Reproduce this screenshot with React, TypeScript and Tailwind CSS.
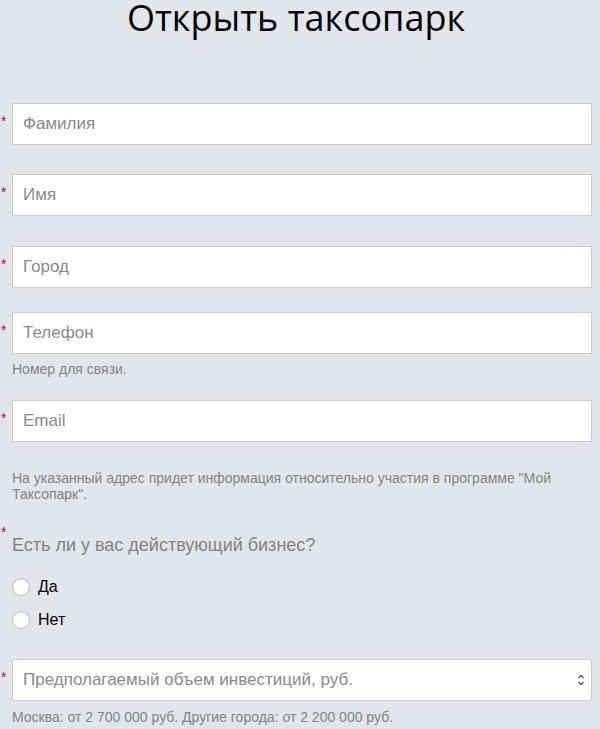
import React from 'react';

const Star: React.FC<{ className?: string }> = ({ className = '' }) => (
  <span className={`w-[12px] shrink-0 pl-[1px] text-[14px] leading-none text-[#d0021b] ${className}`}>*</span>
);

const Field: React.FC<{ placeholder: string; className?: string; children?: React.ReactNode }> = ({
  placeholder,
  className = '',
  children,
}) => (
  <div className={className}>
    <div className="flex">
      <Star className="pt-[11px]" />
      <div className="flex h-[42px] flex-1 items-center border border-[#c9ced6] bg-white px-[10px]">
        <span className="text-[17px] text-[#8a8a8a]">{placeholder}</span>
      </div>
    </div>
    {children}
  </div>
);

const Help: React.FC<{ children: React.ReactNode; className?: string }> = ({ children, className = '' }) => (
  <p className={`pl-[12px] text-[14px] leading-[16px] text-[#7d848c] ${className}`}>{children}</p>
);

const Radio: React.FC<{ label: string }> = ({ label }) => (
  <label className="flex h-[18px] items-center gap-[8px] pl-[12px]">
    <span className="h-[18px] w-[18px] rounded-full border border-[#b9bec6] bg-white shadow-[inset_0_1px_1px_rgba(0,0,0,0.08)]" />
    <span className="text-[16px] text-black">{label}</span>
  </label>
);

export default function App() {
  return (
    <div
      className="min-h-[729px] bg-[#e1e6ed] pr-[8px]"
      style={{ fontFamily: '"Liberation Sans", Arial, sans-serif' }}
    >
      <h1
        className="text-center text-[36px] font-normal leading-[36px] text-black"
        style={{ fontFamily: '"Open Sans", sans-serif' }}
      >
        Открыть таксопарк
      </h1>

      <Field placeholder="Фамилия" className="mt-[67px]" />
      <Field placeholder="Имя" className="mt-[29px]" />
      <Field placeholder="Город" className="mt-[30px]" />
      <Field placeholder="Телефон" className="mt-[24px]">
        <Help className="mt-[7px]">Номер для связи.</Help>
      </Field>
      <Field placeholder="Email" className="mt-[23px]">
        <Help className="mt-[28px]">
          На указанный адрес придет информация относительно участия в программе "Мой Таксопарк".
        </Help>
      </Field>

      <div className="mt-[23px]">
        <Star className="block h-[10px]" />
        <p className="pl-[12px] text-[18px] leading-[20px] text-[#7d848c]">Есть ли у вас действующий бизнес?</p>
        <div className="mt-[23px] flex flex-col gap-[15px]">
          <Radio label="Да" />
          <Radio label="Нет" />
        </div>
      </div>

      <div className="mt-[30px] flex">
        <Star className="pt-[11px]" />
        <div className="flex h-[42px] flex-1 items-center justify-between rounded-[3px] border border-[#c9ced6] bg-white pl-[10px] pr-[6px]">
          <span className="text-[17px] text-[#8a8a8a]">Предполагаемый объем инвестиций, руб.</span>
          <svg width="8" height="14" viewBox="0 0 8 14" fill="none" stroke="#555" strokeWidth="1.3">
            <path d="M1.5 5 L4 2.5 L6.5 5" />
            <path d="M1.5 9 L4 11.5 L6.5 9" />
          </svg>
        </div>
      </div>
      <Help className="mt-[8px]">Москва: от 2 700 000 руб. Другие города: от 2 200 000 руб.</Help>
    </div>
  );
}
